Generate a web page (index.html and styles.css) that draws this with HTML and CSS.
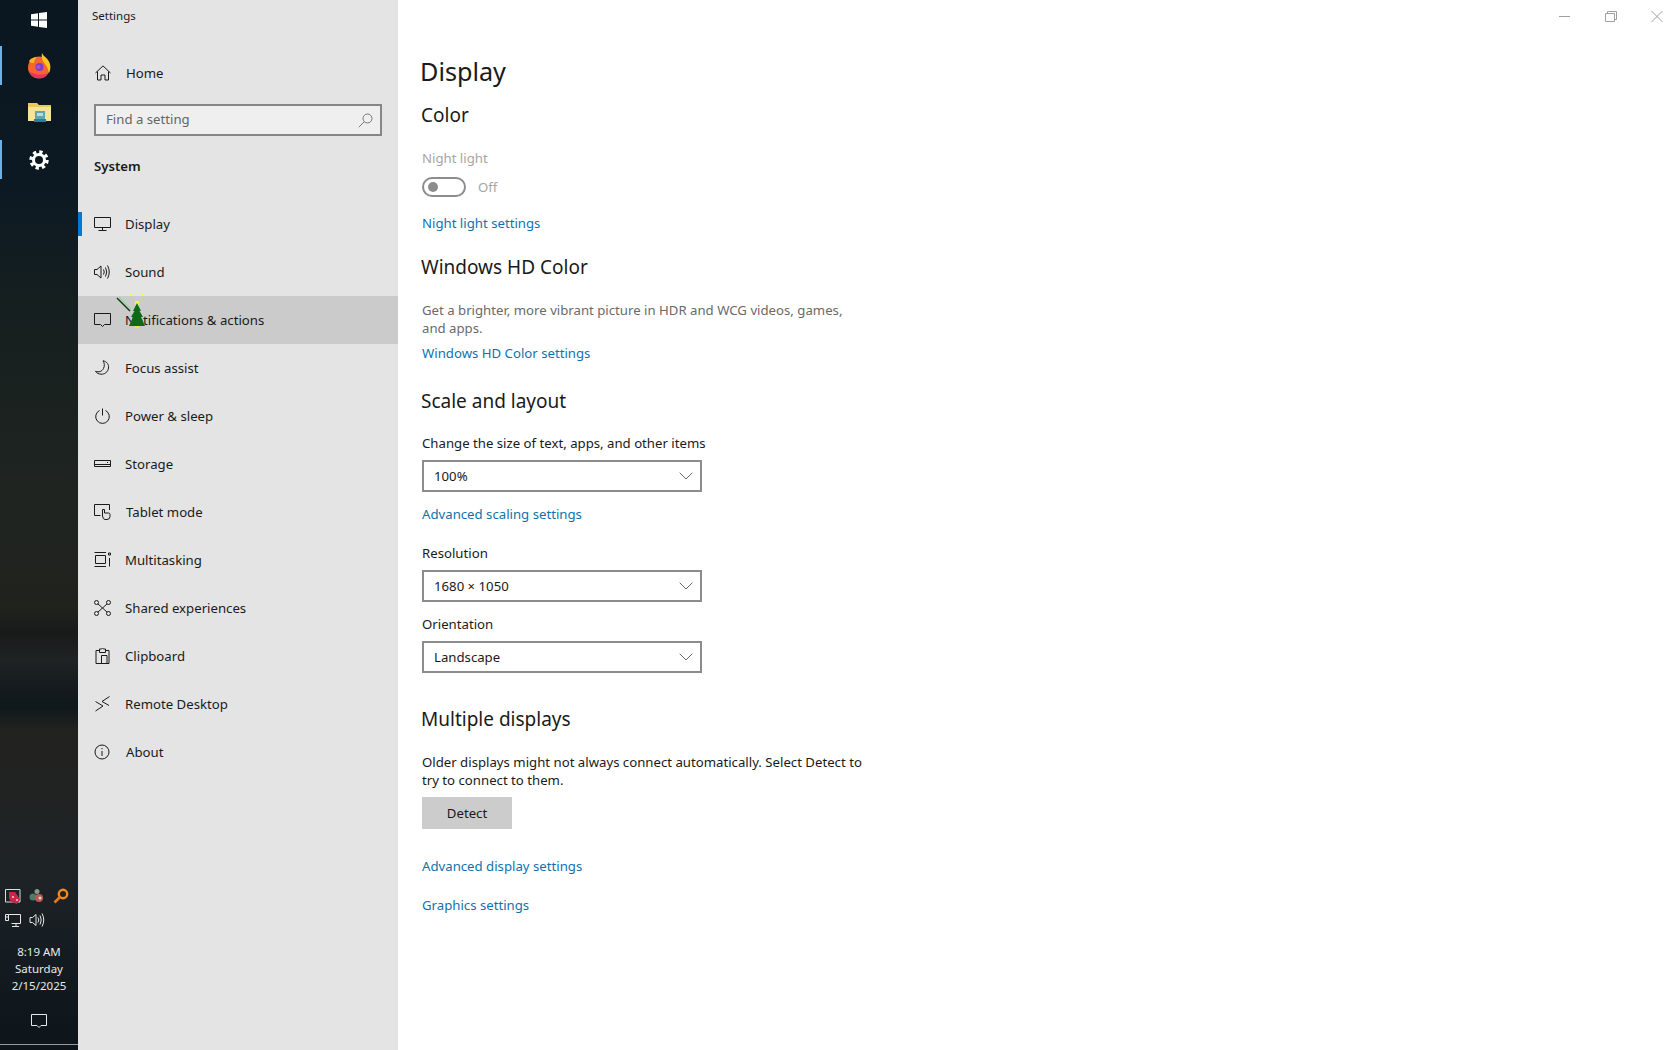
FILE: index.html
```html
<!DOCTYPE html>
<html lang="en">
<head>
<meta charset="utf-8">
<title>Settings</title>
<link rel="stylesheet" href="styles.css">
</head>
<body>
<div class="desktop">
  <aside class="taskbar">
    <div class="tb-apps">
      <div class="tb-item tb-start">
        <svg width="16" height="16" viewBox="0 0 16 16"><path class="fill-white" d="M0 2.2 7 1.2V7.4H0ZM8 1 16 0V7.4H8ZM0 8.4H7V14.8L0 13.8ZM8 8.4H16V16L8 15Z"/></svg>
      </div>
      <div class="tb-item tb-active">
        <svg width="24" height="26" viewBox="0 0 24 26">
          <circle cx="12" cy="14.500" r="11" fill="#f4662c"/>
          <path fill="#e8306a" d="M2 18c2 5 6 7 10 7s7-2 9-5c-4 2-13 3-19-2Z"/>
          <path fill="#ffc21f" d="M15 0c1 3 4 4 6 7 3 4 3 9 1 13-1-4-2-7-4-9-2-3-4-5-3-11Z"/>
          <path fill="#ffb02a" d="M2 8c2-3 5-4 8-4-2 2-3 4-3 6-2 0-4 0-5-2Z"/>
          <circle cx="12.500" cy="14" r="4" fill="#7b3fc4"/>
          <circle cx="11.500" cy="14" r="2" fill="#b04fd0"/>
        </svg>
      </div>
      <div class="tb-item">
        <svg width="23" height="20" viewBox="0 0 23 20">
          <path fill="#e8c95e" d="M0 0H9L11 2H23V18H0Z"/>
          <path fill="#f6e39a" d="M0 4H23V18H0Z"/>
          <path fill="#5fa6b0" d="M7 8H17V18H7Z"/>
          <path fill="#2f7f9a" d="M6 16H18V19H6Z"/>
          <path fill="#b8dbe0" d="M9 10H15V13H9Z"/>
        </svg>
      </div>
      <div class="tb-item tb-active">
        <svg width="20" height="20" viewBox="0 0 20 20" fill="none">
          <circle cx="10" cy="10" r="5.500" stroke="#fff" stroke-width="3"/>
          <circle cx="10" cy="10" r="8" stroke="#fff" stroke-width="3.400" stroke-dasharray="3.300 2.983"/>
        </svg>
      </div>
    </div>
    <div class="tray">
      <div class="tray-row">
        <svg width="16" height="16" viewBox="0 0 16 16" fill="none">
          <path d="M.5 1.500H15V14H.5Z" stroke="#ddd"/>
          <path fill="#c8274a" d="M4 4H10L15 11 12 16 6 14 4 10Z"/>
          <path fill="#f4a0b0" d="M7 8H9V10H7ZM11 11H13V13H11Z"/>
        </svg>
        <svg width="16" height="16" viewBox="0 0 16 16">
          <circle cx="8" cy="3.500" r="2.500" fill="#8a9a8a"/>
          <circle cx="4" cy="9" r="3.500" fill="#4f7a6a"/>
          <circle cx="10" cy="10" r="4" fill="#b85a52"/>
          <circle cx="11" cy="10" r="1.500" fill="#f0d0d0"/>
        </svg>
        <svg width="16" height="16" viewBox="0 0 16 16" fill="none">
          <circle cx="10" cy="6" r="4.200" stroke="#f08a1c" stroke-width="2.400"/>
          <path d="M7 9 1.500 14.500" stroke="#e8791a" stroke-width="2.600"/>
        </svg>
      </div>
      <div class="tray-row">
        <svg class="ico-w" width="16" height="16" viewBox="0 0 16 16">
          <path d="M3.500 2.500H15.500V11.500H6.500M11 11.500V14.500M7 14.500H14M.5 2.500H3.500V8.500H.5ZM.5 5H3.500"/>
        </svg>
        <svg class="ico-w" width="16" height="16" viewBox="0 0 16 16">
          <path d="M1 5.500H3.500L7 2.500V13.500L3.500 10.500H1ZM9 5.500Q10.500 8 9 10.500M11 3.500Q13.500 8 11 12.500M13 1.500Q16.500 8 13 14.500"/>
        </svg>
      </div>
      <div class="clock">
        <div>8:19 AM</div>
        <div>Saturday</div>
        <div>2/15/2025</div>
      </div>
      <div class="tb-notify">
        <svg class="ico-w" width="16" height="16" viewBox="0 0 16 16">
          <path d="M.5 1.500H15.500V12.500H10L8 14.500 6 12.500H.5Z"/>
        </svg>
      </div>
      <div class="tb-edge"></div>
    </div>
  </aside>

  <nav class="sidebar">
    <div class="app-title">Settings</div>
    <div class="home-row">
      <svg class="ico" width="16" height="16" viewBox="0 0 16 16"><path d="M.5 8 8 .9 15.500 8M2.500 6.500V15H6V10H10V15H13.500V6.500"/></svg>
      <span class="home-label">Home</span>
    </div>
    <div class="search">
      <span class="search-text">Find a setting</span>
      <svg class="ico-search" width="15" height="15" viewBox="0 0 15 15"><circle cx="9.500" cy="5.500" r="4.500"/><path d="M6.200 8.800.8 14.200"/></svg>
    </div>
    <div class="group-title">System</div>
    <ul class="nav">
      <li class="nav-row nav-current">
        <svg class="ico" width="17" height="16" viewBox="0 0 17 16"><path d="M.5 1.500H16.500V11.500H.5ZM8.500 11.500V14.500M4.500 14.500H12.500"/></svg>
        <span>Display</span>
      </li>
      <li class="nav-row">
        <svg class="ico" width="17" height="16" viewBox="0 0 17 16"><path d="M.5 5.500H3L7 2V14L3 10.500H.5ZM9.500 5.500Q11 8 9.500 10.500M11.500 3.500Q14 8 11.500 12.500M13.500 1.500Q17 8 13.500 14.500"/></svg>
        <span>Sound</span>
      </li>
      <li class="nav-row nav-hover">
        <svg class="ico" width="17" height="16" viewBox="0 0 17 16"><path d="M.5 1.500H16.500V12.500H10.500L8.500 14.500 6.500 12.500H.5Z"/></svg>
        <span>Notifications &amp; actions</span>
      </li>
      <li class="nav-row">
        <svg class="ico" width="17" height="16" viewBox="0 0 17 16"><path d="M9 .8C13 1.500 15 4.500 14.500 8 14 12 10.500 14.500 7 14.200 4.500 14 2.500 13 1.500 11.300 5 12.500 8 11.500 9.500 8.500 10.800 5.800 10.500 3 9 .8Z"/></svg>
        <span>Focus assist</span>
      </li>
      <li class="nav-row">
        <svg class="ico" width="17" height="16" viewBox="0 0 17 16"><path d="M5.500 2.500A6.800 6.800 0 1 0 11.500 2.500M8.500 .5V7.500"/></svg>
        <span>Power &amp; sleep</span>
      </li>
      <li class="nav-row">
        <svg class="ico" width="17" height="16" viewBox="0 0 17 16"><path d="M.5 4.500H16.500V10.500H.5ZM.5 8.500H16.500M13 6.500H14"/></svg>
        <span>Storage</span>
      </li>
      <li class="nav-row">
        <svg class="ico" width="17" height="16" viewBox="0 0 17 16"><path d="M6.500 11.500H.5V.5H15.500V6M8.500 12V5.500H10.500V9H14.500Q16 9 16 10.500V12.500Q16 15.500 13 15.500H11Q9 15.500 8.500 12Z"/></svg>
        <span class="tablet-label">Tablet mode</span>
      </li>
      <li class="nav-row">
        <svg class="ico" width="17" height="16" viewBox="0 0 17 16"><path d="M.5.500H12M.5 14.500H12M1.500 3.500H11.500V11.500H1.500ZM15.500 6V14.500M14.500 1H16.500V3H14.500Z"/></svg>
        <span>Multitasking</span>
      </li>
      <li class="nav-row">
        <svg class="ico" width="17" height="16" viewBox="0 0 17 16"><circle cx="2.500" cy="2.500" r="2"/><circle cx="14.500" cy="2.500" r="2"/><circle cx="2.500" cy="13.500" r="2"/><circle cx="14.500" cy="13.500" r="2"/><path d="M4 4 13 12M13 4 4 12"/></svg>
        <span>Shared experiences</span>
      </li>
      <li class="nav-row">
        <svg class="ico" width="17" height="16" viewBox="0 0 17 16"><path d="M5 2.500H2V15.500H15V2.500H12M5.500 1V4.500H11.500V1H9.800Q8.500-.5 7.200 1ZM7.500 15.500V7.500H13V15.500"/></svg>
        <span>Clipboard</span>
      </li>
      <li class="nav-row">
        <svg class="ico" width="17" height="16" viewBox="0 0 17 16"><path d="M1.500 15 9 10 1.500 5.500M15.500 .5 8 5.500 15 9.500"/></svg>
        <span>Remote Desktop</span>
      </li>
      <li class="nav-row">
        <svg class="ico" width="17" height="16" viewBox="0 0 17 16"><circle cx="8" cy="8" r="7"/><path d="M8 7V12M8 4V5.200"/></svg>
        <span class="about-label">About</span>
      </li>
    </ul>
  </nav>

  <main class="content">
    <div class="win-controls">
      <svg class="ico-ctl" width="46" height="32" viewBox="0 0 46 32"><path d="M17 16.500H28"/></svg>
      <svg class="ico-ctl" width="46" height="32" viewBox="0 0 46 32"><path d="M17.500 13.500H26.500V21.500H17.500ZM19.500 13.500V11.500H28.500V19.500H26.500"/></svg>
      <svg class="ico-ctl" width="46" height="32" viewBox="0 0 46 32"><path d="M17.500 11 28.500 22M28.500 11 17.500 22"/></svg>
    </div>

    <h1 class="page-title">Display</h1>
    <h2 class="sect sect-first">Color</h2>
    <div class="label label-off label-night">Night light</div>
    <div class="toggle-row">
      <span class="toggle"><span class="toggle-knob"></span></span>
      <span class="toggle-text">Off</span>
    </div>
    <a class="link link-night">Night light settings</a>

    <h2 class="sect sect-hd">Windows HD Color</h2>
    <p class="desc desc-hd">Get a brighter, more vibrant picture in HDR and WCG videos, games, and apps.</p>
    <a class="link link-hd">Windows HD Color settings</a>

    <h2 class="sect sect-scale">Scale and layout</h2>
    <div class="label label-size">Change the size of text, apps, and other items</div>
    <div class="select">
      <span>100%</span>
      <svg class="chev" width="14" height="8" viewBox="0 0 14 8"><path d="M.7.700 7 7 13.300.700"/></svg>
    </div>
    <a class="link link-scaling">Advanced scaling settings</a>
    <div class="label label-res">Resolution</div>
    <div class="select">
      <span>1680 × 1050</span>
      <svg class="chev" width="14" height="8" viewBox="0 0 14 8"><path d="M.7.700 7 7 13.300.700"/></svg>
    </div>
    <div class="label label-orient">Orientation</div>
    <div class="select">
      <span>Landscape</span>
      <svg class="chev" width="14" height="8" viewBox="0 0 14 8"><path d="M.7.700 7 7 13.300.700"/></svg>
    </div>

    <h2 class="sect sect-multi">Multiple displays</h2>
    <p class="desc desc-multi">Older displays might not always connect automatically. Select Detect to try to connect to them.</p>
    <div class="button">Detect</div>
    <a class="link link-adv">Advanced display settings</a>
    <a class="link link-gfx">Graphics settings</a>
  </main>

  <svg class="cursor" width="36" height="40" viewBox="0 0 36 40">
    <path d="M1 5 14 18" stroke="#123d12" stroke-width="1.500"/>
    <path d="M3 4 15 16" stroke="#8fd08f" stroke-width="1"/>
    <path fill="#f5f060" d="M19 8h4v4h-4ZM14 0h2v2h-2ZM25 0h2v2h-2Z"/>
    <path fill="#0d6b18" d="M21 10 25 18H23.500L27 24H25L29 33H13L17 24H15L18.500 18H17Z"/>
    <path fill="#f0e040" d="M19 33H23V35H19Z"/>
  </svg>
</div>
</body>
</html>
```

FILE: styles.css
```css
* { box-sizing: border-box; }

html, body { margin: 0; padding: 0; }

body {
  font-family: "Noto Sans", "Open Sans", "Liberation Sans", sans-serif;
  font-size: 13.2px;
  color: #1a1a1a;
  background: #fff;
}

.desktop {
  position: relative;
  display: flex;
  width: 1680px;
  height: 1050px;
  overflow: hidden;
}

/* Taskbar */
.taskbar {
  flex: 0 0 78px;
  display: flex;
  flex-direction: column;
  justify-content: space-between;
  background: linear-gradient(180deg,
    #0a1620 0, #0c1923 180px, #17201f 330px, #1f2421 500px, #20221c 610px,
    #181a1a 632px, #1f2323 660px, #141a1e 690px, #10181c 707px, #22221f 730px,
    #1e2326 870px, #10181e 1000px, #0d151b 1050px);
}

.tb-apps { display: flex; flex-direction: column; }

.tb-item {
  position: relative;
  height: 47px;
  display: flex;
  align-items: center;
  justify-content: center;
}

.tb-start { height: 40px; margin-bottom: 2px; }

.tb-active::before {
  content: "";
  position: absolute;
  left: 0;
  top: 4px;
  bottom: 4px;
  width: 2px;
  background: #6cb2ea;
}

.fill-white { fill: #fff; }

.tray { display: flex; flex-direction: column; }

.tray-row {
  display: flex;
  align-items: center;
  gap: 8px;
  height: 24px;
  padding-left: 5px;
}

.ico-w { fill: none; stroke: #e8e8e8; stroke-width: 1; }

.clock {
  margin-top: 11px;
  margin-bottom: 1px;
  text-align: center;
  font-size: 11.5px;
  line-height: 17px;
  color: #e8e8e8;
}

.tb-notify {
  display: flex;
  justify-content: center;
  margin-top: 18px;
  height: 31px;
}

.tb-edge {
  height: 1px;
  margin-bottom: 5px;
  background: #9a9a9a;
}

/* Sidebar */
.sidebar {
  flex: 0 0 320px;
  background: #e4e4e4;
}

.app-title {
  height: 32px;
  line-height: 32px;
  padding-left: 14px;
  font-size: 11.5px;
}

.home-row {
  display: flex;
  align-items: center;
  height: 47px;
  margin-top: 17px;
  padding-left: 17px;
}

.home-label { margin-left: 15px; }

.ico { fill: none; stroke: #1a1a1a; stroke-width: 1; flex: none; }

.search {
  display: flex;
  align-items: center;
  justify-content: space-between;
  width: 288px;
  height: 32px;
  margin: 8px 0 0 16px;
  padding: 0 7px 3px 10px;
  background: #efefef;
  border: 2px solid #868686;
  color: #666;
}

.ico-search { fill: none; stroke: #777; stroke-width: 1; margin-top: 3px; }

.group-title {
  margin: 14px 0 0 16px;
  line-height: 32px;
  font-weight: 600;
}

.nav { list-style: none; margin: 18px 0 0; padding: 0; }

.nav-row {
  position: relative;
  display: flex;
  align-items: center;
  gap: 14px;
  height: 48px;
  padding-left: 16px;
}

.about-label, .tablet-label { margin-left: 1px; }

.nav-hover { background: #cbcbcb; }

.nav-current::before {
  content: "";
  position: absolute;
  left: 0;
  top: 12px;
  width: 4px;
  height: 24px;
  background: #0078d4;
}

/* Content */
.content {
  position: relative;
  flex: 1;
  padding: 52px 0 0 24px;
  background: #fff;
}

.win-controls {
  position: absolute;
  top: 0;
  right: 0;
  display: flex;
}

.ico-ctl { fill: none; stroke: #a0a0a0; stroke-width: 1; }

.page-title {
  margin: 0 0 0 -2px;
  font-size: 25.2px;
  font-weight: 400;
  line-height: 39px;
}

.sect {
  margin: 0 0 0 -1px;
  font-size: 19px;
  font-weight: 400;
  line-height: 28px;
}

.sect-first { margin-top: 10px; }
.sect-hd { margin-top: 20px; }
.sect-scale { margin-top: 24px; }
.sect-multi { margin-top: 32px; }

.label { line-height: 20px; }
.label-off { color: #a6a6a6; }
.label-night { margin-top: 19px; }
.label-size { margin-top: 18px; }
.label-res { margin-top: 19px; }
.label-orient { margin-top: 12px; }

.toggle-row {
  display: flex;
  align-items: center;
  gap: 12px;
  height: 20px;
  margin-top: 9px;
}

.toggle {
  display: flex;
  align-items: center;
  width: 44px;
  height: 20px;
  padding-left: 4px;
  border: 2px solid #8c8c8c;
  border-radius: 10px;
}

.toggle-knob {
  width: 10px;
  height: 10px;
  border-radius: 50%;
  background: #8c8c8c;
}

.toggle-text { color: #a6a6a6; }

.link {
  display: block;
  line-height: 20px;
  color: #0f72ad;
}

.link-night { margin-top: 16px; }
.link-hd { margin-top: 6px; }
.link-scaling { margin-top: 12px; }
.link-adv { margin-top: 27px; }
.link-gfx { margin-top: 19px; }

.desc {
  width: 445px;
  margin: 20px 0 0;
  line-height: 18px;
}

.desc-hd { color: #6a6a6a; }

.select {
  display: flex;
  align-items: center;
  justify-content: space-between;
  width: 280px;
  height: 32px;
  margin-top: 7px;
  padding: 0 7px 1px 10px;
  border: 2px solid #8c8c8c;
  background: #fff;
}

.chev { fill: none; stroke: #666; stroke-width: 1; margin-top: 1px; }

.button {
  width: 90px;
  height: 32px;
  margin-top: 8px;
  line-height: 32px;
  text-align: center;
  background: #cccccc;
}

/* Mouse cursor over the hovered row */
.cursor {
  position: absolute;
  left: 116px;
  top: 293px;
}
```
